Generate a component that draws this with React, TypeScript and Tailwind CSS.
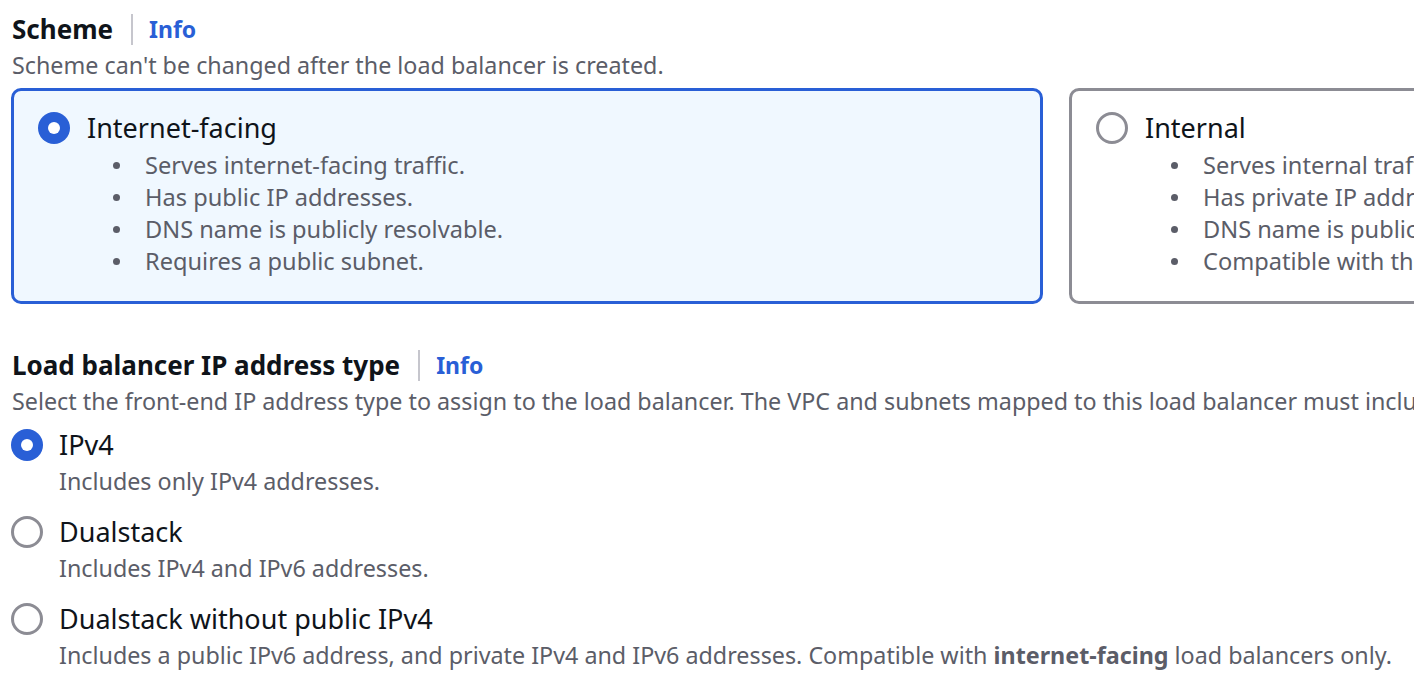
const font = { fontFamily: '"Noto Sans", "Open Sans", sans-serif' };

function Radio({ checked }: { checked: boolean }) {
  if (checked) {
    return (
      <span className="flex h-[32px] w-[32px] shrink-0 items-center justify-center rounded-full bg-[#295fd6]">
        <span className="h-[12px] w-[12px] rounded-full bg-white" />
      </span>
    );
  }
  return <span className="h-[32px] w-[32px] shrink-0 rounded-full border-[3px] border-[#8c8c94] bg-white" />;
}

function Header({ title }: { title: string }) {
  return (
    <div className="flex h-[36px] items-center">
      <h2 className="text-[26px] font-bold leading-[36px] text-[#0f141a]">{title}</h2>
      <span className="ml-[18px] mr-[16px] h-[31px] w-[2px] bg-[#c6c6cd]" />
      <a className="text-[23px] font-bold leading-[36px] text-[#295fd6]">Info</a>
    </div>
  );
}

function Tile({ label, items, checked }: { label: string; items: string[]; checked: boolean }) {
  return (
    <div
      className={
        "w-[1032px] shrink-0 rounded-[10px] border-[3px] pl-[24px] pr-[24px] pt-[19px] pb-[24px] " +
        (checked ? "border-[#295fd6] bg-[#f0f8ff]" : "border-[#8c8c94] bg-white")
      }
    >
      <div className="flex h-[36px] items-center gap-[17px]">
        <Radio checked={checked} />
        <span className="whitespace-nowrap text-[27px] leading-[36px] text-[#0f141a]">{label}</span>
      </div>
      <ul className="mt-[3px] pl-[49px]">
        {items.map((t) => (
          <li key={t} className="flex h-[32px] items-center whitespace-nowrap text-[23.6px] leading-[32px] text-[#5b5d68]">
            <span className="ml-[26px] mr-[25px] h-[7px] w-[7px] shrink-0 rounded-full bg-[#5b5d68]" />
            {t}
          </li>
        ))}
      </ul>
    </div>
  );
}

function Option({ label, checked, children }: { label: string; checked: boolean; children: React.ReactNode }) {
  return (
    <div>
      <div className="flex h-[36px] items-center gap-[16px]">
        <Radio checked={checked} />
        <span className="whitespace-nowrap text-[27px] leading-[36px] text-[#0f141a]">{label}</span>
      </div>
      <p className="mt-[2px] whitespace-nowrap pl-[48px] text-[23.3px] leading-[32px] text-[#5b5d68]">{children}</p>
    </div>
  );
}

export default function App() {
  return (
    <div className="h-[684px] w-[1414px] overflow-hidden bg-white pl-[11px] pt-[11px]" style={font}>
      <div className="pl-[1px]">
        <Header title="Scheme" />
        <p className="mt-[2px] whitespace-nowrap text-[23.3px] leading-[32px] text-[#5b5d68]">
          Scheme can't be changed after the load balancer is created.
        </p>
      </div>
      <div className="mt-[7px] flex gap-[26px]">
        <Tile
          checked
          label="Internet-facing"
          items={[
            "Serves internet-facing traffic.",
            "Has public IP addresses.",
            "DNS name is publicly resolvable.",
            "Requires a public subnet.",
          ]}
        />
        <Tile
          checked={false}
          label="Internal"
          items={[
            "Serves internal traffic.",
            "Has private IP addresses.",
            "DNS name is publicly resolvable to private IP addresses.",
            "Compatible with the IPv4 and Dualstack IP address types.",
          ]}
        />
      </div>

      <div className="mt-[43px] pl-[1px]">
        <Header title="Load balancer IP address type" />
        <p className="mt-[2px] whitespace-nowrap text-[23.3px] leading-[32px] text-[#5b5d68]">
          Select the front-end IP address type to assign to the load balancer. The VPC and subnets mapped to this load
          balancer must include the selected IP address types.
        </p>
      </div>
      <div className="mt-[10px] flex flex-col gap-[17px]">
        <Option checked label="IPv4">
          Includes only IPv4 addresses.
        </Option>
        <Option checked={false} label="Dualstack">
          Includes IPv4 and IPv6 addresses.
        </Option>
        <Option checked={false} label="Dualstack without public IPv4">
          Includes a public IPv6 address, and private IPv4 and IPv6 addresses. Compatible with{" "}
          <b className="font-bold">internet-facing</b> load balancers only.
        </Option>
      </div>
    </div>
  );
}
